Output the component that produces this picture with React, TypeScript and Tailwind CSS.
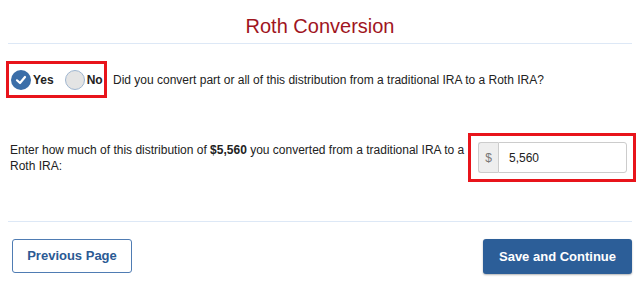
export default function App() {
  return (
    <div className="w-[640px] h-[285px] bg-white px-2 font-['Liberation_Sans',Arial,sans-serif] text-[#222] overflow-hidden">
      <h1 className="text-[20px] leading-[26px] text-center text-[#a0151e] pt-[13px] pb-[4px] border-b border-[#dde8f6]">
        Roth Conversion
      </h1>

      <div className="flex items-center mt-[17px]">
        <div className="flex items-center h-[37px] w-[101px] -ml-[2px] border-[3px] border-[#e8141b] pl-[2px] shrink-0">
          <div className="flex items-center">
            <span className="w-[20px] h-[20px] rounded-full bg-[#3b6ea8] flex items-center justify-center">
              <svg width="12" height="12" viewBox="0 0 12 12">
                <path d="M2 6.3 L5 9 L10 3" fill="none" stroke="white" strokeWidth="2.2" strokeLinecap="round" strokeLinejoin="round" />
              </svg>
            </span>
            <span className="ml-[2px] text-[12px] font-bold">Yes</span>
          </div>
          <div className="flex items-center ml-[11px]">
            <span className="w-[20px] h-[20px] rounded-full bg-[#e4e4e4] border-[1.5px] border-[#9fb6d0]" />
            <span className="ml-[2px] text-[12px] font-bold">No</span>
          </div>
        </div>
        <p className="ml-[6px] text-[12px]">Did you convert part or all of this distribution from a traditional IRA to a Roth IRA?</p>
      </div>

      <div className="flex items-start mt-[35px]">
        <p className="w-[458px] shrink-0 ml-[2px] mt-[9px] text-[12px] leading-[16px]">
          Enter how much of this distribution of <b>$5,560</b> you converted from a traditional IRA to a Roth IRA:
        </p>
        <div className="w-[168px] h-[49px] border-[3px] border-[#e8141b] flex items-center pl-[7px] shrink-0">
          <div className="flex h-[31px] w-[149px]">
            <span className="w-[20px] bg-[#eeeeee] border border-r-0 border-[#cccccc] rounded-l-[3px] flex items-center justify-center text-[12px] text-[#777]">$</span>
            <div className="flex-1 border border-[#cccccc] rounded-r-[3px] flex items-center pl-[10px] text-[12px]">5,560</div>
          </div>
        </div>
      </div>

      <div className="border-t border-[#dde8f6] mt-[39px] pt-[17px] flex justify-between">
        <button className="ml-[4px] w-[120px] h-[34px] border border-[#4f7cb3] rounded-[3px] text-[#2b5a94] text-[13px] font-bold bg-white">
          Previous Page
        </button>
        <button className="w-[149px] h-[35px] rounded-[3px] bg-[#2c5e98] text-white text-[13px] font-bold shadow-[0_1px_2px_rgba(0,0,0,0.3)]">
          Save and Continue
        </button>
      </div>
    </div>
  );
}
